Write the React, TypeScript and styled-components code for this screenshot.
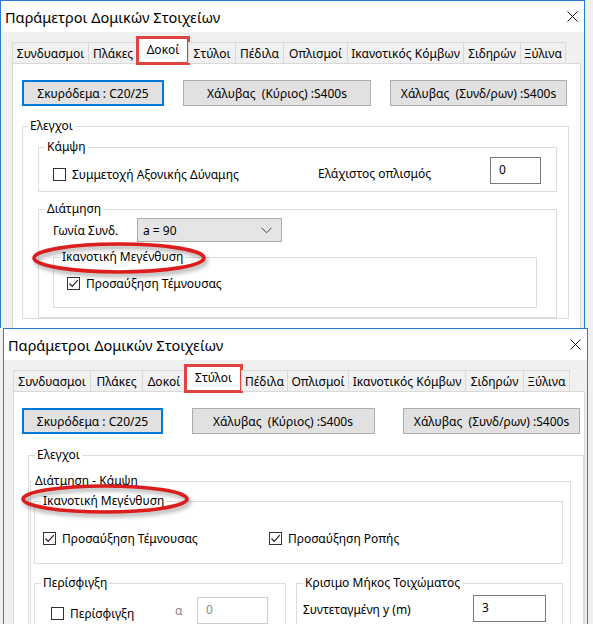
import React from "react";
import styled, { createGlobalStyle } from "styled-components";

const GlobalStyle = createGlobalStyle`
  html, body {
    margin: 0;
    padding: 0;
    background: #f0f0f0;
  }
  body {
    font-family: "Noto Sans", "Liberation Sans", sans-serif;
    font-size: 12px;
    color: #000;
  }
`;

const Desktop = styled.div`
  width: 593px;
  height: 624px;
  overflow: hidden;
`;

type WindowProps = { $left: number; $clip?: number };

const Window = styled.div<WindowProps>`
  position: relative;
  box-sizing: border-box;
  margin-left: ${(p) => p.$left}px;
  width: 585px;
  height: ${(p) => (p.$clip ? `${p.$clip}px` : "auto")};
  border: 1px solid #2b7bd4;
  border-bottom: ${(p) => (p.$clip ? "none" : "1px solid #2b7bd4")};
  background: #f0f0f0;
  overflow: hidden;
`;

const TitleBar = styled.div`
  height: 31px;
  display: flex;
  align-items: center;
  justify-content: space-between;
  padding-left: 4px;
  background: #fff;
  font-size: 14.5px;
`;

const CloseButton = styled.div`
  width: 24px;
  height: 31px;
  display: flex;
  align-items: center;
  justify-content: center;
`;

const Body = styled.div<{ $inset: number; $right: number }>`
  padding: 5px ${(p) => p.$right}px 0 ${(p) => p.$inset}px;
`;

const TabStrip = styled.div`
  position: relative;
  z-index: 1;
  height: 26px;
  display: flex;
  align-items: flex-end;
`;

type TabProps = { $w: number; $active?: boolean };

const Tab = styled.div<TabProps>`
  box-sizing: border-box;
  width: ${(p) => p.$w}px;
  height: ${(p) => (p.$active ? 27 : 21)}px;
  margin-bottom: ${(p) => (p.$active ? -1 : 0)}px;
  margin-right: -1px;
  display: flex;
  align-items: center;
  justify-content: center;
  border: 1px solid #d9d9d9;
  border-bottom: none;
  background: ${(p) => (p.$active ? "#fff" : "#f0f0f0")};
  outline: ${(p) => (p.$active ? "3px solid #e2423f" : "none")};
  outline-offset: -2px;
  padding-bottom: ${(p) => (p.$active ? 3 : 0)}px;
  white-space: nowrap;
`;

const Panel = styled.div`
  background: #fff;
  border: 1px solid #d9d9d9;
  height: 700px;
`;

const ButtonRow = styled.div<{ $left: number; $right: number }>`
  display: flex;
  justify-content: space-between;
  margin: 16px ${(p) => p.$right}px 0 ${(p) => p.$left}px;
`;

const Button = styled.div<{ $w: number; $default?: boolean }>`
  box-sizing: border-box;
  width: ${(p) => p.$w}px;
  height: 26px;
  display: flex;
  align-items: center;
  justify-content: center;
  background: #e1e1e1;
  border: ${(p) => (p.$default ? "2px solid #0078d7" : "1px solid #adadad")};
  white-space: nowrap;
`;

type GroupProps = { $top: number; $left?: number; $right?: number; $w?: number };

const Group = styled.fieldset<GroupProps>`
  box-sizing: border-box;
  min-width: 0;
  margin: ${(p) => p.$top}px ${(p) => p.$right ?? 0}px 0 ${(p) => p.$left ?? 0}px;
  width: ${(p) => (p.$w ? `${p.$w}px` : "auto")};
  padding: 0;
  border: 1px solid #dcdcdc;
`;

const Legend = styled.legend<{ $indent?: number }>`
  margin-left: ${(p) => p.$indent ?? 6}px;
  padding: 0 2px;
  line-height: 16px;
  white-space: nowrap;
`;

type PadProps = { $t?: number; $r?: number; $b?: number; $l?: number };

const GroupBody = styled.div<PadProps>`
  padding: ${(p) => p.$t ?? 0}px ${(p) => p.$r ?? 0}px ${(p) => p.$b ?? 0}px
    ${(p) => p.$l ?? 0}px;
`;

const Row = styled.div<{ $h: number; $mt?: number }>`
  display: flex;
  align-items: center;
  height: ${(p) => p.$h}px;
  margin-top: ${(p) => p.$mt ?? 0}px;
`;

const SplitRow = styled.div`
  display: flex;
  gap: 10px;
`;

const CheckLabel = styled.label<{ $w?: number; $drop?: number }>`
  display: flex;
  align-items: center;
  gap: 6px;
  width: ${(p) => (p.$w ? `${p.$w}px` : "auto")};
  flex: none;
  margin-top: ${(p) => p.$drop ?? 0}px;
  white-space: nowrap;
`;

const Box = styled.span`
  box-sizing: border-box;
  width: 13px;
  height: 13px;
  border: 1px solid #333;
  background: #fff;
  display: flex;
  align-items: center;
  justify-content: center;
`;

const Text = styled.span<{ $w?: number; $grow?: boolean; $muted?: boolean; $drop?: number }>`
  width: ${(p) => (p.$w ? `${p.$w}px` : "auto")};
  flex: ${(p) => (p.$grow ? "1" : "none")};
  color: ${(p) => (p.$muted ? "#8a8a8a" : "#000")};
  margin-top: ${(p) => p.$drop ?? 0}px;
  white-space: nowrap;
`;

const Input = styled.div<{ $w: number; $h?: number; $disabled?: boolean }>`
  box-sizing: border-box;
  width: ${(p) => p.$w}px;
  height: ${(p) => p.$h ?? 27}px;
  flex: none;
  padding: 3px 0 0 8px;
  border: 1px solid ${(p) => (p.$disabled ? "#cccccc" : "#7a7a7a")};
  background: #fff;
  color: ${(p) => (p.$disabled ? "#8a8a8a" : "#000")};
  align-self: flex-start;
`;

const Select = styled.div<{ $w: number }>`
  box-sizing: border-box;
  width: ${(p) => p.$w}px;
  height: 24px;
  display: flex;
  align-items: center;
  justify-content: space-between;
  padding: 0 9px 0 5px;
  background: #e5e5e5;
  border: 1px solid #acacac;
`;

const Annotation = styled.svg`
  position: absolute;
  pointer-events: none;
  filter: drop-shadow(2px 3px 2px rgba(0, 0, 0, 0.35));
`;

const CloseIcon = () => (
  <svg width="11" height="11" viewBox="0 0 11 11">
    <path d="M0.5 0.5 L10.5 10.5 M10.5 0.5 L0.5 10.5" stroke="#111" strokeWidth="1" />
  </svg>
);

const Check = ({ on }: { on?: boolean }) => (
  <Box>
    {on && (
      <svg width="11" height="11" viewBox="0 0 11 11">
        <path d="M1.5 5.5 L4.2 8.3 L9.8 2.2" fill="none" stroke="#222" strokeWidth="1.2" />
      </svg>
    )}
  </Box>
);

const Chevron = () => (
  <svg width="11" height="7" viewBox="0 0 11 7">
    <path d="M0.5 0.8 L5.5 5.8 L10.5 0.8" fill="none" stroke="#444" strokeWidth="1" />
  </svg>
);

const RedEllipse = ({ x, y, rx, ry }: { x: number; y: number; rx: number; ry: number }) => (
  <Annotation
    width={rx * 2 + 12}
    height={ry * 2 + 12}
    style={{ left: x - rx - 6, top: y - ry - 6 }}
  >
    <ellipse
      cx={rx + 6}
      cy={ry + 6}
      rx={rx}
      ry={ry}
      fill="none"
      stroke="#dc1d1d"
      strokeWidth="3.6"
    />
  </Annotation>
);

const tabNames = [
  "Συνδυασμοι",
  "Πλάκες",
  "Δοκοί",
  "Στύλοι",
  "Πέδιλα",
  "Οπλισμοί",
  "Ικανοτικός Κόμβων",
  "Σιδηρών",
  "Ξύλινα",
];

const Tabs = ({ widths, active }: { widths: number[]; active: number }) => (
  <TabStrip>
    {tabNames.map((name, i) => (
      <Tab key={name} $w={widths[i]} $active={i === active}>
        {name}
      </Tab>
    ))}
  </TabStrip>
);

const Title = () => (
  <TitleBar>
    <span>Παράμετροι Δομικών Στοιχείων</span>
    <CloseButton>
      <CloseIcon />
    </CloseButton>
  </TitleBar>
);

const BeamsWindow = () => (
  <Window $left={0} $clip={328}>
    <Title />
    <Body $inset={11} $right={3}>
      <Tabs widths={[77, 50, 52, 48, 49, 65, 117, 58, 46]} active={2} />
      <Panel>
        <ButtonRow $left={9} $right={13}>
          <Button $w={142} $default>
            Σκυρόδεμα : C20/25
          </Button>
          <Button $w={188}>Χάλυβας&nbsp; (Κύριος) :S400s</Button>
          <Button $w={177}>Χάλυβας&nbsp; (Συνδ/ρων) :S400s</Button>
        </ButtonRow>
        <Group $top={12} $left={9} $w={547}>
          <Legend $indent={5}>Ελεγχοι</Legend>
          <GroupBody $l={15} $r={11}>
            <Group $top={5}>
              <Legend>Κάμψη</Legend>
              <GroupBody $t={2} $b={7} $l={14} $r={15}>
                <Row $h={27}>
                  <CheckLabel $w={265} $drop={7}>
                    <Check />
                    Συμμετοχή Αξονικής Δύναμης
                  </CheckLabel>
                  <Text $grow $drop={5}>
                    Ελάχιστος οπλισμός
                  </Text>
                  <Input $w={51}>0</Input>
                </Row>
              </GroupBody>
            </Group>
            <Group $top={9}>
              <Legend>Διάτμηση</Legend>
              <GroupBody $t={1} $b={9} $l={14} $r={19}>
                <Row $h={24}>
                  <Text $w={84}>Γωνία Συνδ.</Text>
                  <Select $w={145}>
                    <span>a = 90</span>
                    <Chevron />
                  </Select>
                </Row>
                <Group $top={7}>
                  <Legend>Ικανοτική Μεγένθυση</Legend>
                  <GroupBody $l={13} $b={16}>
                    <Row $h={16} $mt={10}>
                      <CheckLabel>
                        <Check on />
                        Προσαύξηση Τέμνουσας
                      </CheckLabel>
                    </Row>
                  </GroupBody>
                </Group>
              </GroupBody>
            </Group>
          </GroupBody>
        </Group>
      </Panel>
    </Body>
    <RedEllipse x={118} y={257} rx={85} ry={14} />
  </Window>
);

const ColumnsWindow = () => (
  <Window $left={3}>
    <Title />
    <Body $inset={9} $right={2}>
      <Tabs widths={[78, 53, 44, 57, 47, 62, 118, 59, 47]} active={3} />
      <Panel>
        <ButtonRow $left={8} $right={4}>
          <Button $w={141} $default>
            Σκυρόδεμα : C20/25
          </Button>
          <Button $w={183}>Χάλυβας&nbsp; (Κύριος) :S400s</Button>
          <Button $w={177}>Χάλυβας&nbsp; (Συνδ/ρων) :S400s</Button>
        </ButtonRow>
        <Group $top={13} $left={14}>
          <Legend>Ελεγχοι</Legend>
          <GroupBody $r={12} $l={1}>
            <Group $top={10}>
              <Legend $indent={2}>Διάτμηση - Κάμψη</Legend>
              <GroupBody $l={3} $r={7} $b={20}>
                <Group $top={4}>
                  <Legend>Ικανοτική Μεγένθυση</Legend>
                  <GroupBody $l={8} $b={17}>
                    <Row $h={16} $mt={21}>
                      <CheckLabel $w={226}>
                        <Check on />
                        Προσαύξηση Τέμνουσας
                      </CheckLabel>
                      <CheckLabel>
                        <Check on />
                        Προσαύξηση Ροπής
                      </CheckLabel>
                    </Row>
                  </GroupBody>
                </Group>
                <SplitRow>
                  <Group $top={11} $w={252}>
                    <Legend>Περίσφιγξη</Legend>
                    <GroupBody $t={6} $l={16} $b={10}>
                      <Row $h={27}>
                        <CheckLabel $w={124} $drop={6}>
                          <Check />
                          Περίσφιγξη
                        </CheckLabel>
                        <Text $w={22} $muted>
                          α
                        </Text>
                        <Input $w={71} $disabled>
                          0
                        </Input>
                      </Row>
                    </GroupBody>
                  </Group>
                  <Group $top={11} $w={267}>
                    <Legend>Κρισιμο Μήκος Τοιχώματος</Legend>
                    <GroupBody $t={4} $l={6} $b={10}>
                      <Row $h={27}>
                        <Text $w={170} $drop={2}>
                          Συντεταγμένη y (m)
                        </Text>
                        <Input $w={73}>3</Input>
                      </Row>
                    </GroupBody>
                  </Group>
                </SplitRow>
              </GroupBody>
            </Group>
          </GroupBody>
        </Group>
      </Panel>
    </Body>
    <RedEllipse x={101} y={170} rx={82} ry={13} />
  </Window>
);

const App: React.FC = () => (
  <>
    <GlobalStyle />
    <Desktop>
      <BeamsWindow />
      <ColumnsWindow />
    </Desktop>
  </>
);

export default App;
